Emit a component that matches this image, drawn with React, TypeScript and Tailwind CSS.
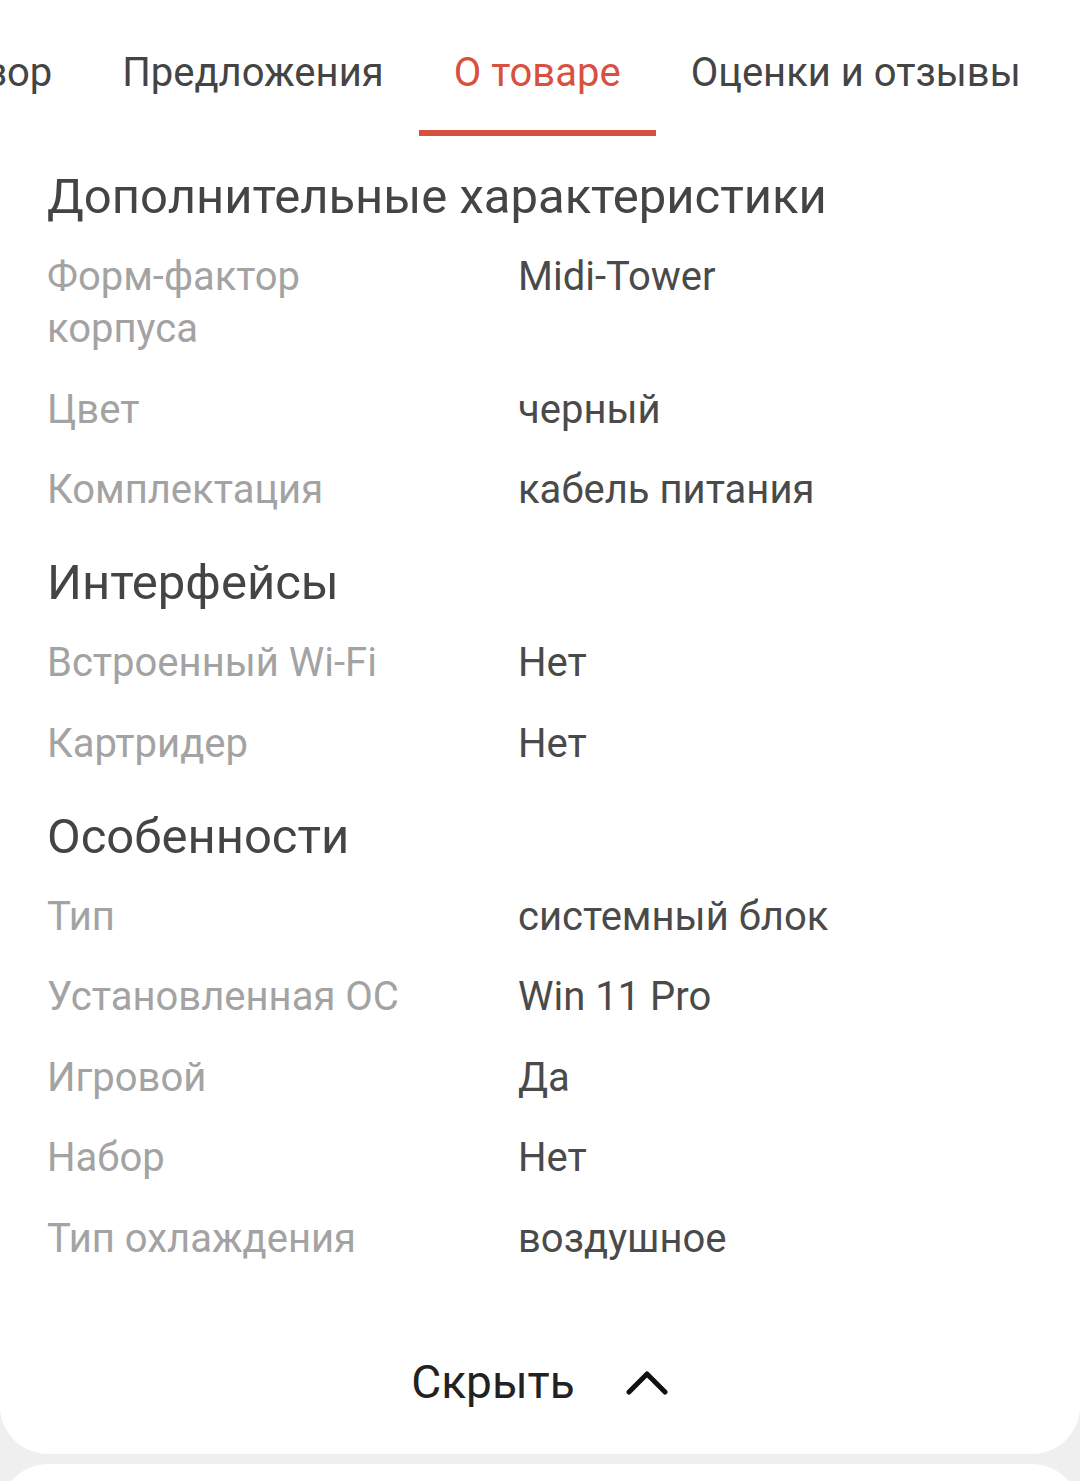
import React from 'react';

interface Spec {
  label: string;
  value: string;
}

interface Section {
  title: string;
  specs: Spec[];
}

const tabs = ['Обзор', 'Предложения', 'О товаре', 'Оценки и отзывы'];
const activeTab = 'О товаре';

const sections: Section[] = [
  {
    title: 'Дополнительные характеристики',
    specs: [
      { label: 'Форм-фактор корпуса', value: 'Midi-Tower' },
      { label: 'Цвет', value: 'черный' },
      { label: 'Комплектация', value: 'кабель питания' },
    ],
  },
  {
    title: 'Интерфейсы',
    specs: [
      { label: 'Встроенный Wi-Fi', value: 'Нет' },
      { label: 'Картридер', value: 'Нет' },
    ],
  },
  {
    title: 'Особенности',
    specs: [
      { label: 'Тип', value: 'системный блок' },
      { label: 'Установленная ОС', value: 'Win 11 Pro' },
      { label: 'Игровой', value: 'Да' },
      { label: 'Набор', value: 'Нет' },
      { label: 'Тип охлаждения', value: 'воздушное' },
    ],
  },
];

const App = () => {
  return (
    <div
      className="min-h-[1481px] bg-[#efefef] overflow-hidden"
      style={{ fontFamily: 'Roboto, "Noto Sans", sans-serif' }}
    >
      <div className="bg-white rounded-b-[48px] pb-[46px]">
        {/* Tabs, scrolled so the first one is cut at the edge */}
        <div className="overflow-hidden">
          <div className="flex ml-[-98px] whitespace-nowrap">
            {tabs.map((tab) => (
              <div key={tab} className="flex flex-col pt-[48px]">
                <span
                  className={
                    tab === activeTab
                      ? 'px-[35px] text-[40px] leading-[50px] text-[#d9503f]'
                      : 'px-[35px] text-[40px] leading-[50px] text-[#444444]'
                  }
                >
                  {tab}
                </span>
                <div
                  className={
                    tab === activeTab
                      ? 'mt-[32px] h-[6px] bg-[#d9503f]'
                      : 'mt-[32px] h-[6px] bg-transparent'
                  }
                />
              </div>
            ))}
          </div>
        </div>

        {/* Specs */}
        <div className="px-[47px] pt-[8px]">
          {sections.map((section) => (
            <div key={section.title}>
              <h2 className="pt-[27px] pb-[14px] text-[49px] leading-[52px] text-[#444444]">
                {section.title}
              </h2>
              {section.specs.map((spec) => (
                <div
                  key={spec.label}
                  className="grid grid-cols-[400px_1fr] gap-x-[71px] py-[14.2px] text-[40px] leading-[52px]"
                >
                  <span className="text-[#a3a3a3]">{spec.label}</span>
                  <span className="text-[#4a4a4a]">{spec.value}</span>
                </div>
              ))}
            </div>
          ))}
        </div>

        {/* Toggle */}
        <div className="flex items-center justify-center gap-[50px] mt-[77px]">
          <span className="text-[46px] leading-[52px] text-[#222222]">Скрыть</span>
          <svg width="44" height="26" viewBox="0 0 44 26" fill="none">
            <path
              d="M4 23 L22 5 L40 23"
              stroke="#111111"
              strokeWidth="5"
              strokeLinecap="round"
              strokeLinejoin="round"
            />
          </svg>
        </div>
      </div>

      {/* Next card */}
      <div className="mt-[10px] h-[60px] bg-white rounded-t-[48px]" />
    </div>
  );
};

export default App;
